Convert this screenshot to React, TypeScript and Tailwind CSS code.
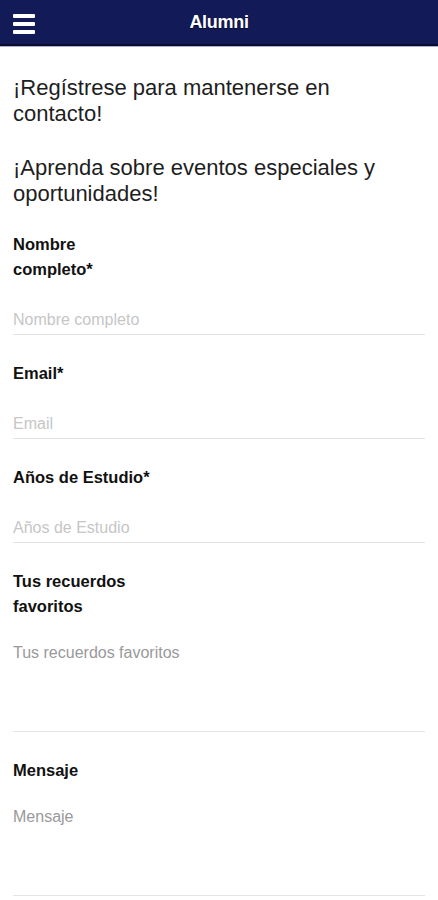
import React from "react";

const font = { fontFamily: '"Liberation Sans", Arial, sans-serif' };

function Label({ children }: { children: React.ReactNode }) {
  return <div className="text-[16.5px] leading-[25px] font-bold text-[#111]">{children}</div>;
}

function Field({ label, placeholder }: { label: React.ReactNode; placeholder: string }) {
  return (
    <div className="mt-[26px] first:mt-0">
      <Label>{label}</Label>
      <input
        placeholder={placeholder}
        className="mt-6 block h-[29px] w-full border-b border-[#e3e3e3] bg-transparent text-[16px] outline-none placeholder:text-[#c6c6c6]"
        style={font}
      />
    </div>
  );
}

function Area({ label, placeholder }: { label: React.ReactNode; placeholder: string }) {
  return (
    <div className="mt-[26px]">
      <Label>{label}</Label>
      <textarea
        placeholder={placeholder}
        className="mt-6 block h-[89px] w-full resize-none border-b border-[#e3e3e3] bg-transparent text-[16px] leading-[20px] outline-none placeholder:text-[#999]"
        style={font}
      />
    </div>
  );
}

export default function App() {
  return (
    <div className="min-h-[900px] w-[438px] bg-white" style={font}>
      <header className="relative flex h-[46px] items-center justify-center border-b-2 border-[#080b2e] bg-[#131a58]">
        <div className="absolute left-[13px] top-[14px] flex w-[22px] flex-col gap-[4px]">
          <div className="h-[4px] rounded-[1px] bg-white" />
          <div className="h-[4px] rounded-[1px] bg-white" />
          <div className="h-[4px] rounded-[1px] bg-white" />
        </div>
        <h1 className="text-[18px] font-bold tracking-[-0.3px] text-white [text-shadow:0_1px_1px_rgba(0,0,0,0.6)]">Alumni</h1>
      </header>
      <div className="h-px bg-[#aab1d8]" />
      <main className="px-[13px]">
        <p className="mt-[28px] text-[22px] leading-[26px] text-[#1e1e1e]">
          ¡Regístrese para mantenerse en
          <br />
          contacto!
        </p>
        <p className="mt-[28px] text-[22px] leading-[26px] text-[#1e1e1e]">
          ¡Aprenda sobre eventos especiales y
          <br />
          oportunidades!
        </p>
        <div className="mt-[25px]">
          <Field label={<>Nombre<br />completo*</>} placeholder="Nombre completo" />
          <Field label="Email*" placeholder="Email" />
          <Field label="Años de Estudio*" placeholder="Años de Estudio" />
          <Area label={<>Tus recuerdos<br />favoritos</>} placeholder="Tus recuerdos favoritos" />
          <Area label="Mensaje" placeholder="Mensaje" />
        </div>
      </main>
    </div>
  );
}
